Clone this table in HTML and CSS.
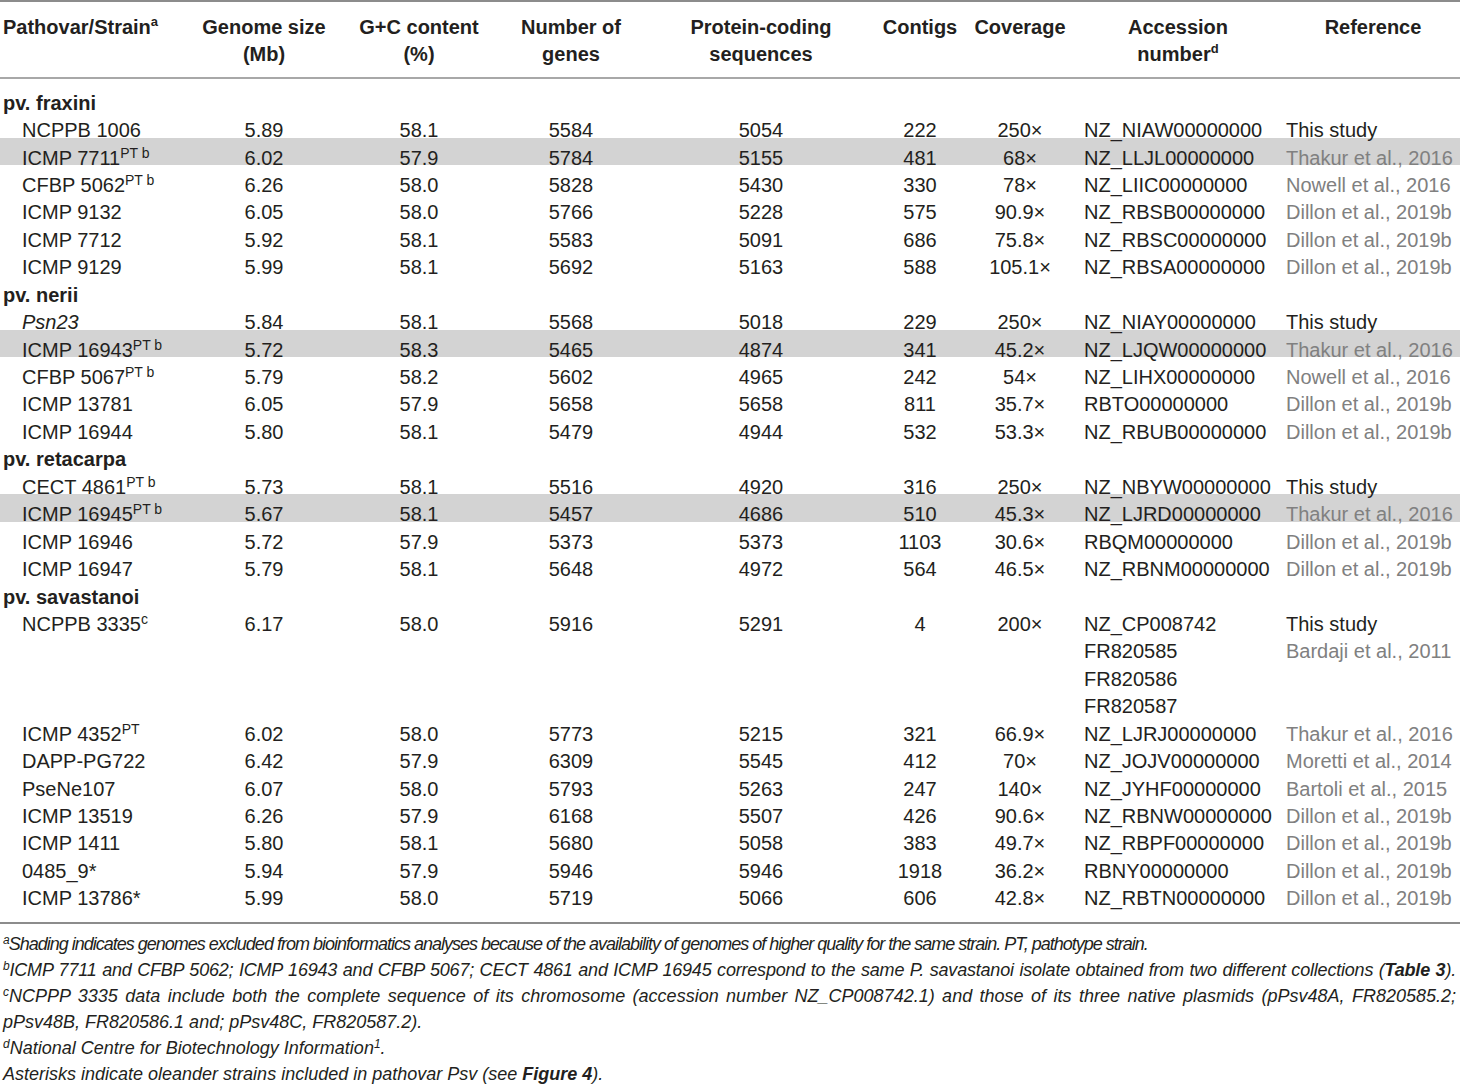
FILE: index.html
```html
<!DOCTYPE html>
<html>
<head>
<meta charset="utf-8">
<link rel="stylesheet" href="styles.css">
</head>
<body>
<table class="gt">
  <colgroup>
    <col class="c1"><col class="c2"><col class="c3"><col class="c4"><col class="c5"><col class="c6"><col class="c7"><col class="c8"><col class="c9">
  </colgroup>
  <thead>
    <tr>
      <th class="l">Pathovar/Strain<sup class="hs">a</sup></th>
      <th>Genome size<br>(Mb)</th>
      <th>G+C content<br>(%)</th>
      <th>Number of<br>genes</th>
      <th>Protein-coding<br>sequences</th>
      <th>Contigs</th>
      <th>Coverage</th>
      <th>Accession<br>number<sup class="hs">d</sup></th>
      <th class="ref">Reference</th>
    </tr>
  </thead>
  <tbody>
    <tr class="grp first"><td colspan="9">pv. fraxini</td></tr>
    <tr><td class="s">NCPPB 1006</td><td>5.89</td><td>58.1</td><td>5584</td><td>5054</td><td>222</td><td>250×</td><td class="acc">NZ_NIAW00000000</td><td class="ref">This study</td></tr>
    <tr class="shade"><td class="s">ICMP 7711<sup>PT b</sup></td><td>6.02</td><td>57.9</td><td>5784</td><td>5155</td><td>481</td><td>68×</td><td class="acc">NZ_LLJL00000000</td><td class="ref g">Thakur et al., 2016</td></tr>
    <tr><td class="s">CFBP 5062<sup>PT b</sup></td><td>6.26</td><td>58.0</td><td>5828</td><td>5430</td><td>330</td><td>78×</td><td class="acc">NZ_LIIC00000000</td><td class="ref g">Nowell et al., 2016</td></tr>
    <tr><td class="s">ICMP 9132</td><td>6.05</td><td>58.0</td><td>5766</td><td>5228</td><td>575</td><td>90.9×</td><td class="acc">NZ_RBSB00000000</td><td class="ref g">Dillon et al., 2019b</td></tr>
    <tr><td class="s">ICMP 7712</td><td>5.92</td><td>58.1</td><td>5583</td><td>5091</td><td>686</td><td>75.8×</td><td class="acc">NZ_RBSC00000000</td><td class="ref g">Dillon et al., 2019b</td></tr>
    <tr><td class="s">ICMP 9129</td><td>5.99</td><td>58.1</td><td>5692</td><td>5163</td><td>588</td><td>105.1×</td><td class="acc">NZ_RBSA00000000</td><td class="ref g">Dillon et al., 2019b</td></tr>
    <tr class="grp"><td colspan="9">pv. nerii</td></tr>
    <tr><td class="s"><i>Psn23</i></td><td>5.84</td><td>58.1</td><td>5568</td><td>5018</td><td>229</td><td>250×</td><td class="acc">NZ_NIAY00000000</td><td class="ref">This study</td></tr>
    <tr class="shade"><td class="s">ICMP 16943<sup>PT b</sup></td><td>5.72</td><td>58.3</td><td>5465</td><td>4874</td><td>341</td><td>45.2×</td><td class="acc">NZ_LJQW00000000</td><td class="ref g">Thakur et al., 2016</td></tr>
    <tr><td class="s">CFBP 5067<sup>PT b</sup></td><td>5.79</td><td>58.2</td><td>5602</td><td>4965</td><td>242</td><td>54×</td><td class="acc">NZ_LIHX00000000</td><td class="ref g">Nowell et al., 2016</td></tr>
    <tr><td class="s">ICMP 13781</td><td>6.05</td><td>57.9</td><td>5658</td><td>5658</td><td>811</td><td>35.7×</td><td class="acc">RBTO00000000</td><td class="ref g">Dillon et al., 2019b</td></tr>
    <tr><td class="s">ICMP 16944</td><td>5.80</td><td>58.1</td><td>5479</td><td>4944</td><td>532</td><td>53.3×</td><td class="acc">NZ_RBUB00000000</td><td class="ref g">Dillon et al., 2019b</td></tr>
    <tr class="grp"><td colspan="9">pv. retacarpa</td></tr>
    <tr><td class="s">CECT 4861<sup>PT b</sup></td><td>5.73</td><td>58.1</td><td>5516</td><td>4920</td><td>316</td><td>250×</td><td class="acc">NZ_NBYW00000000</td><td class="ref">This study</td></tr>
    <tr class="shade"><td class="s">ICMP 16945<sup>PT b</sup></td><td>5.67</td><td>58.1</td><td>5457</td><td>4686</td><td>510</td><td>45.3×</td><td class="acc">NZ_LJRD00000000</td><td class="ref g">Thakur et al., 2016</td></tr>
    <tr><td class="s">ICMP 16946</td><td>5.72</td><td>57.9</td><td>5373</td><td>5373</td><td>1103</td><td>30.6×</td><td class="acc">RBQM00000000</td><td class="ref g">Dillon et al., 2019b</td></tr>
    <tr><td class="s">ICMP 16947</td><td>5.79</td><td>58.1</td><td>5648</td><td>4972</td><td>564</td><td>46.5×</td><td class="acc">NZ_RBNM00000000</td><td class="ref g">Dillon et al., 2019b</td></tr>
    <tr class="grp"><td colspan="9">pv. savastanoi</td></tr>
    <tr><td class="s">NCPPB 3335<sup>c</sup></td><td>6.17</td><td>58.0</td><td>5916</td><td>5291</td><td>4</td><td>200×</td><td class="acc">NZ_CP008742</td><td class="ref">This study</td></tr>
    <tr><td class="s"></td><td></td><td></td><td></td><td></td><td></td><td></td><td class="acc">FR820585</td><td class="ref g">Bardaji et al., 2011</td></tr>
    <tr><td class="s"></td><td></td><td></td><td></td><td></td><td></td><td></td><td class="acc">FR820586</td><td class="ref"></td></tr>
    <tr><td class="s"></td><td></td><td></td><td></td><td></td><td></td><td></td><td class="acc">FR820587</td><td class="ref"></td></tr>
    <tr><td class="s">ICMP 4352<sup>PT</sup></td><td>6.02</td><td>58.0</td><td>5773</td><td>5215</td><td>321</td><td>66.9×</td><td class="acc">NZ_LJRJ00000000</td><td class="ref g">Thakur et al., 2016</td></tr>
    <tr><td class="s">DAPP-PG722</td><td>6.42</td><td>57.9</td><td>6309</td><td>5545</td><td>412</td><td>70×</td><td class="acc">NZ_JOJV00000000</td><td class="ref g">Moretti et al., 2014</td></tr>
    <tr><td class="s">PseNe107</td><td>6.07</td><td>58.0</td><td>5793</td><td>5263</td><td>247</td><td>140×</td><td class="acc">NZ_JYHF00000000</td><td class="ref g">Bartoli et al., 2015</td></tr>
    <tr><td class="s">ICMP 13519</td><td>6.26</td><td>57.9</td><td>6168</td><td>5507</td><td>426</td><td>90.6×</td><td class="acc">NZ_RBNW00000000</td><td class="ref g">Dillon et al., 2019b</td></tr>
    <tr><td class="s">ICMP 1411</td><td>5.80</td><td>58.1</td><td>5680</td><td>5058</td><td>383</td><td>49.7×</td><td class="acc">NZ_RBPF00000000</td><td class="ref g">Dillon et al., 2019b</td></tr>
    <tr><td class="s">0485_9*</td><td>5.94</td><td>57.9</td><td>5946</td><td>5946</td><td>1918</td><td>36.2×</td><td class="acc">RBNY00000000</td><td class="ref g">Dillon et al., 2019b</td></tr>
    <tr><td class="s">ICMP 13786*</td><td>5.99</td><td>58.0</td><td>5719</td><td>5066</td><td>606</td><td>42.8×</td><td class="acc">NZ_RBTN00000000</td><td class="ref g">Dillon et al., 2019b</td></tr>
  </tbody>
</table>
<div class="rule"></div>
<div class="notes">
  <p class="n na"><sup>a</sup>Shading indicates genomes excluded from bioinformatics analyses because of the availability of genomes of higher quality for the same strain. PT, pathotype strain.</p>
  <p class="n nb"><sup>b</sup>ICMP 7711 and CFBP 5062; ICMP 16943 and CFBP 5067; CECT 4861 and ICMP 16945 correspond to the same P. savastanoi isolate obtained from two different collections (<b>Table 3</b>).</p>
  <p class="n nj"><sup>c</sup>NCPPP 3335 data include both the complete sequence of its chromosome (accession number NZ_CP008742.1) and those of its three native plasmids (pPsv48A, FR820585.2;</p>
  <p class="n">pPsv48B, FR820586.1 and; pPsv48C, FR820587.2).</p>
  <p class="n"><sup>d</sup>National Centre for Biotechnology Information<sup>1</sup>.</p>
  <p class="n">Asterisks indicate oleander strains included in pathovar Psv (see <b>Figure 4</b>).</p>
</div>
</body>
</html>
```
FILE: styles.css
```css
html, body {
  margin: 0;
  padding: 0;
  background: #ffffff;
}
body {
  width: 1460px;
  font-family: "Liberation Sans", Arial, sans-serif;
  color: #231f20;
}
.gt {
  width: 1460px;
  table-layout: fixed;
  border-collapse: collapse;
  border-spacing: 0;
  font-size: 20px;
}
.c1 { width: 190px; }
.c2 { width: 148px; }
.c3 { width: 162px; }
.c4 { width: 142px; }
.c5 { width: 238px; }
.c6 { width: 80px; }
.c7 { width: 120px; }
.c8 { width: 196px; }
.c9 { width: 184px; }

.gt thead th {
  border-top: 2px solid #8c8c8c;
  border-bottom: 2px solid #a8a8a8;
  padding: 11.6px 0 9.7px;
  line-height: 27px;
  font-weight: 700;
  text-align: center;
  vertical-align: top;
  white-space: nowrap;
}
.gt thead th.l {
  text-align: left;
  padding-left: 3px;
}
.gt thead th.ref {
  padding-left: 10px;
}
.hs {
  font-size: 13px;
  vertical-align: 8px;
  line-height: 0;
  font-weight: 700;
}
.gt td {
  padding: 13px 0 0;
  line-height: 14.43px;
  text-align: center;
  white-space: nowrap;
  vertical-align: top;
}
.gt td.s {
  text-align: left;
  padding-left: 22px;
}
.gt td.acc {
  text-align: left;
  padding-left: 4px;
}
.gt td.ref {
  text-align: left;
  padding-left: 10px;
}
.gt td.g {
  color: #808080;
}
.gt .grp td {
  text-align: left;
  padding-left: 3px;
  font-weight: 700;
}
.gt .first td {
  padding-top: 16.4px;
}
.gt .shade td {
  background: #d3d3d3;
}
.gt td sup {
  font-size: 14px;
  vertical-align: 7px;
  line-height: 0;
}
.rule {
  margin-top: 16px;
  height: 2px;
  background: #8c8c8c;
}
.notes {
  margin-top: 7px;
  padding: 0 4px 0 3px;
  font-size: 18px;
  font-style: italic;
  line-height: 26px;
}
.n {
  margin: 0;
  white-space: nowrap;
}
.n sup {
  font-size: 12px;
  vertical-align: 6px;
  line-height: 0;
}
.na {
  letter-spacing: -1px;
}
.nb {
  letter-spacing: -0.2px;
  text-align: justify;
  text-align-last: justify;
  white-space: normal;
}
.nj {
  text-align: justify;
  text-align-last: justify;
  white-space: normal;
}
```
